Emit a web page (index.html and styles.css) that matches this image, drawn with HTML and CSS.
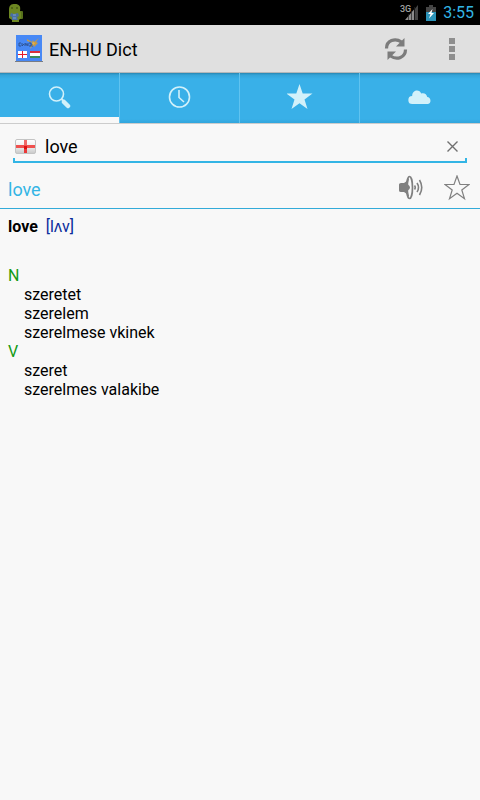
FILE: index.html
```html
<!DOCTYPE html>
<html lang="en">
<head>
<meta charset="utf-8">
<meta name="viewport" content="width=device-width, initial-scale=1">
<title>EN-HU Dict</title>
<link rel="stylesheet" href="styles.css">
</head>
<body>
<div class="status">
  <svg class="robot" width="16" height="20" viewBox="0 0 16 20" aria-hidden="true">
    <rect x="10" y="8" width="5" height="8" rx="1" fill="#56701b"/>
    <path d="M1 7C1 2 3 1 7 1s6 2 5 7l1 2v5l-2 2v2H4v-2l-3-2v-5z" fill="#6d8722"/>
    <circle cx="4" cy="5" r=".8" fill="#30400c"/><circle cx="9" cy="5" r=".8" fill="#30400c"/>
    <path d="M3 10l3 1 4-1 1 3-2 1 1 3H4v-3l-2-1z" fill="#496fa0"/>
    <path d="M5 12h3M5 15h3" stroke="#7fa3cd"/>
  </svg>
  <div class="indicators">
    <span class="network">3G</span>
    <svg class="signal" width="13" height="15" viewBox="0 0 13 15" aria-hidden="true">
      <path d="M0 15L9 4.500V15z" fill="#8c8c8c"/><path d="M10 15V3.500L13 0v15z" fill="#444"/>
      <path d="M3.500 9v6M6.500 6v9M9.500 2v13" stroke="#222" stroke-width=".7"/>
    </svg>
    <svg class="battery" width="10" height="16" viewBox="0 0 10 16" aria-hidden="true">
      <path d="M3 0h4v2h3v14H0V2h3z" fill="#454545"/><path d="M0 7h10v9H0z" fill="#2b93b8"/>
      <path d="M6.500 4L2 9h2.500L3 13.500 8 8H5.500z" fill="#fff"/>
    </svg>
    <time class="time">3:55</time>
  </div>
</div>
<header class="actionbar">
  <svg class="logo" width="28" height="28" viewBox="0 0 28 28" aria-hidden="true">
    <path d="M0 26h28v1H0z" fill="#777c85"/><path d="M1 0h26v26H1z" fill="#4788f5"/>
    <path d="M12 4l5 3 1-2 1 2 5-4-3 4 2 1-4 4-1-4-6-2z" fill="#c89b45"/>
    <path d="M18 7l2 1-5 6 2-5z" fill="#e8b246"/>
    <path d="M4 8h2M4 8v3h2M7 8v3l2-2M10 8v3M10 9h2v2M13 8v3M14 8h2v3h-2M17 9v3" fill="none" stroke="#29477c" stroke-width=".8"/>
    <path d="M3 16h9v7H3z" fill="#fff"/><path d="M7 16h1v7H7zM3 19h9v1H3z" fill="#e51c2b"/>
    <path d="M15 16h10v7H15z" fill="#fff"/><path d="M15 16h10v2H15z" fill="#d82f3d"/><path d="M15 21h10v2H15z" fill="#3b8a5c"/>
  </svg>
  <h1 class="title">EN-HU Dict</h1>
  <button class="iconbtn action" aria-label="Refresh">
    <svg width="24" height="24" viewBox="0 0 24 24" aria-hidden="true">
      <g id="arrow"><path d="M2.500 11.500C2.500 3.500 11 .5 17.500 5" fill="none" stroke="#7c7c7c" stroke-width="3.200"/><path d="M20.500 1v8.500H12z" fill="#7c7c7c"/></g>
      <use href="#arrow" transform="rotate(180 12 12)"/>
    </svg>
  </button>
  <button class="iconbtn action" aria-label="More options">
    <svg width="24" height="24" viewBox="0 0 24 24" aria-hidden="true"><path d="M9 1h6v6H9zM9 9h6v6H9zM9 17h6v6H9z" fill="#8f8f8f"/></svg>
  </button>
</header>
<nav class="tabs">
  <button class="tab active" aria-label="Search">
    <svg width="24" height="24" viewBox="0 0 24 24" aria-hidden="true"><circle cx="8.500" cy="9" r="7" fill="none" stroke="#d2f1fa" stroke-width="1.600"/><path d="M13.500 14l3 3" stroke="#d2f1fa" stroke-width="2"/><path d="M16 17l4 4" stroke="#d2f1fa" stroke-width="4.500" stroke-linecap="round"/></svg>
  </button>
  <button class="tab" aria-label="History">
    <svg width="24" height="24" viewBox="0 0 24 24" aria-hidden="true"><circle cx="11.500" cy="12" r="10" fill="none" stroke="#d2f1fa" stroke-width="1.600"/><path d="M11 5v7.500l5 4.500" fill="none" stroke="#d2f1fa" stroke-width="1.600"/></svg>
  </button>
  <button class="tab" aria-label="Favourites">
    <svg width="26" height="26" viewBox="0 0 26 26" aria-hidden="true"><path d="M12.500 0l3.200 9.500h9.800l-8 6 3 9.500-8-5.800-8 5.800 3-9.500-8-6h9.800z" fill="#d2f1fa"/></svg>
  </button>
  <button class="tab" aria-label="Online">
    <svg width="24" height="24" viewBox="0 0 24 24" aria-hidden="true"><path d="M4.500 19a4 4 0 0 1-.3-8C4 8 6 5.500 9 5.500c2 0 3.500 1 4.200 3 3-1 5.500.5 6 3.500A3.600 3.600 0 0 1 20 19z" fill="#d2f1fa"/></svg>
  </button>
</nav>
<main>
  <form class="search">
    <svg class="flag" width="21" height="15" viewBox="0 0 21 15" aria-hidden="true">
      <defs><linearGradient id="gloss" x2="0" y2="1"><stop stop-color="#fff"/><stop offset=".5" stop-color="#eee"/><stop offset="1" stop-color="#c8c8c8"/></linearGradient></defs>
      <rect x=".5" y=".5" width="20" height="14" rx="1.500" fill="url(#gloss)" stroke="#c4c4c4"/>
      <path d="M9 1h3v13H9z" fill="#ea3838"/><path d="M1 6h19v3H1z" fill="#f0504e"/><path d="M9 1h3v5H9z" fill="#ef6a68"/><path d="M9 7h3v3H9z" fill="#dc1010"/>
    </svg>
    <input class="query" type="text" value="love" aria-label="Search word">
    <button class="iconbtn clear" type="button" aria-label="Clear">
      <svg width="12" height="12" viewBox="0 0 12 12" aria-hidden="true"><path d="M.5 .5l10 10M10.500 .5l-10 10" stroke="#707070" stroke-width="1.400"/></svg>
    </button>
  </form>
  <div class="headword">
    <h2 class="word">love</h2>
    <button class="iconbtn" aria-label="Pronounce">
      <svg width="26" height="26" viewBox="0 0 26 26" aria-hidden="true">
        <path d="M1 9.500Q1 8 3 8h3q4-2 5-7v23q-1-5-5-7H3q-2 0-2-1.500z" fill="#808080"/>
        <ellipse cx="11.500" cy="12.500" rx="3" ry="11" fill="#f8f8f8" stroke="#808080" stroke-width="1.700"/>
        <path d="M10 3q-3 9.500 0 19l1-1q-2-8.500 0-17z" fill="#808080"/>
        <path d="M10 9.500q4 3 0 6z" fill="#808080"/>
        <path d="M16.500 10.500q1.500 2 0 4M19 8q3 4.500 0 9M21.500 5q4.500 7.500 0 15" fill="none" stroke="#808080" stroke-width="1.600"/>
      </svg>
    </button>
    <button class="iconbtn" aria-label="Add to favourites">
      <svg width="26" height="26" viewBox="0 0 26 26" aria-hidden="true"><path d="M13 1l3 8.500h9l-7.200 5.500 2.700 8.700-7.500-5.400-7.500 5.400 2.700-8.700L1 9.500h9z" fill="none" stroke="#808080" stroke-width="1.200"/></svg>
    </button>
  </div>
  <article class="entry">
    <p class="lemma"><b>love</b> <span class="ipa">[lʌv]</span></p>
    <h3 class="pos">N</h3>
    <ul class="senses"><li>szeretet</li><li>szerelem</li><li>szerelmese vkinek</li></ul>
    <h3 class="pos">V</h3>
    <ul class="senses"><li>szeret</li><li>szerelmes valakibe</li></ul>
  </article>
</main>
</body>
</html>
```
FILE: styles.css
```css
* { box-sizing: border-box; }
body { margin: 0; min-height: 100vh; background: #f8f8f8; color: #000; font-family: Roboto, sans-serif; font-size: 16px; line-height: 19px; }
h1, h2, h3, p, ul { margin: 0; padding: 0; font-weight: 400; }
svg { display: block; flex: none; }
button { border: 0; padding: 0; background: none; }

.status { display: flex; justify-content: space-between; align-items: center; height: 25px; padding: 0 6px 0 8px; background: #000; }
.indicators { display: flex; align-items: center; }
.network { align-self: flex-start; font-size: 9px; line-height: 12px; font-weight: 500; color: #a0a0a0; }
.signal { margin: 0 8px 0 -6px; }
.battery { margin-right: 7px; }
.time { font-size: 16px; color: #33b5e5; }

.actionbar { display: flex; align-items: center; height: 48px; padding-left: 15px; background: #e0e0e0; border-bottom: 1px solid #b4b8ba; }
.title { flex: 1; margin-left: 6px; padding-top: 2px; font-size: 18px; line-height: 24px; }
.iconbtn { display: flex; align-items: center; justify-content: center; }
.action { width: 56px; height: 48px; }

.tabs { display: grid; grid-template-columns: repeat(4, 1fr); height: 51px; background: linear-gradient(#2786b2 0, #34a4d8 2px, #39b0e8 6px, #39b0e8 46px, #31a5dc 50px); border-bottom: 1px solid #ccc; }
.tab { display: flex; align-items: center; justify-content: center; border-right: 1px solid #60c3f0; padding: 4px 0 6px; }
.tab:last-child { border-right: 0; }
.tab.active { box-shadow: inset 0 -6px #f8f8f8; }

.search { position: relative; display: flex; align-items: center; height: 34px; margin: 5px 13px 0; padding: 3px 8px 0 2px; border-bottom: 2px solid #33b5e5; }
.search::before, .search::after { content: ""; position: absolute; bottom: 0; width: 2px; height: 3px; background: #33b5e5; }
.search::before { left: 0; }
.search::after { right: 0; }
.query { flex: 1; min-width: 0; border: 0; padding: 1px 0 0; margin-left: 9px; outline: 0; background: none; color: #000; font: 18px/24px Roboto, sans-serif; }

.headword { display: flex; align-items: center; gap: 20px; height: 46px; padding: 4px 10px 0 8px; border-bottom: 1px solid #33abd9; }
.word { flex: 1; padding-top: 4px; font-size: 18px; line-height: 24px; color: #33b5e5; }

.entry { padding: 8px; }
.lemma { margin-bottom: 30px; }
.lemma b { margin-right: 4px; }
.ipa { color: #0a2d9c; }
.pos { font-size: 16px; color: #129a12; }
.senses { list-style: none; padding-left: 16px; }
```
